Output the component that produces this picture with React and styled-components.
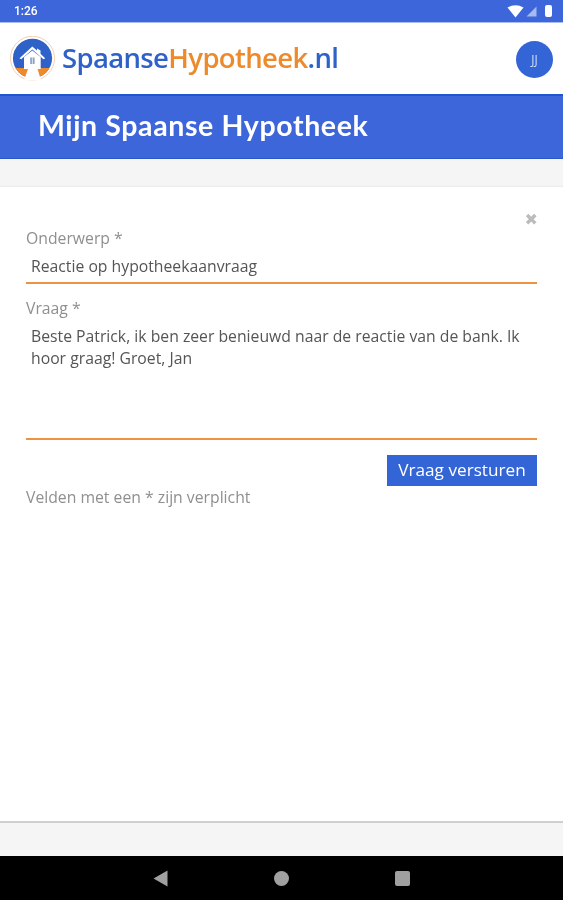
import React from 'react';
import styled, { createGlobalStyle } from 'styled-components';

const GlobalStyle = createGlobalStyle`
  html, body {
    margin: 0;
    padding: 0;
    background: #f5f5f5;
    font-family: "Open Sans", "Liberation Sans", sans-serif;
  }
  * { box-sizing: border-box; }
`;

const Logo = () => (
  <svg width="45" height="45" viewBox="0 0 45 45">
    <circle cx="22.5" cy="22.3" r="22" fill="#fff" stroke="#f5cfae" strokeWidth="1" />
    <clipPath id="logoClip">
      <circle cx="22.5" cy="22.3" r="19.6" />
    </clipPath>
    <g clipPath="url(#logoClip)">
      <rect x="0" y="0" width="45" height="45" fill="#2f62c9" />
      <rect x="0" y="32" width="45" height="13" fill="#ec8a2c" />
    </g>
    <path d="M18.3 32 L27.3 32 L31 44.5 L14 44.5 Z" fill="#fff" />
    <path d="M14 21 L22.3 14.5 L30.7 21 L30.7 33 L14 33 Z" fill="#fff" />
    <path d="M9.5 22.2 L22.3 10.5 L27 14.6 L27 12.6 L30.5 14.6 L30.5 17.8 L35.2 22.2 L33.5 23.2 L22.3 13.6 L11.2 23.2 Z" fill="#fff" />
    <rect x="20.2" y="21.5" width="4.4" height="6.5" fill="#8ca3c4" />
    <path d="M22.4 21.5 V28" stroke="#fff" strokeWidth="0.7" />
  </svg>
);

const App = () => {
  return (
    <Screen>
      <GlobalStyle />
      <StatusBar>
        <Clock>1:26</Clock>
        <StatusIcons>
          <svg width="17" height="13" viewBox="0 0 17 13">
            <path d="M0.5 2.5 Q8.5 -2 16.5 2.5 L8.5 12.5 Z" fill="#fff" />
          </svg>
          <svg width="11" height="11" viewBox="0 0 11 11">
            <path d="M10.5 0.5 V10.5 H0.5 Z" fill="#fff" opacity="0.55" />
          </svg>
          <Battery />
        </StatusIcons>
      </StatusBar>

      <Header>
        <Brand>
          <Logo />
          <BrandName>
            Spaanse<BrandAccent>Hypotheek</BrandAccent>.nl
          </BrandName>
        </Brand>
        <Avatar>JJ</Avatar>
      </Header>

      <TitleBar>
        <Title>Mijn Spaanse Hypotheek</Title>
      </TitleBar>

      <Main>
        <Card>
          <CloseRow>
            <CloseIcon>✖</CloseIcon>
          </CloseRow>
          <Label>Onderwerp *</Label>
          <Field>Reactie op hypotheekaanvraag</Field>
          <Label $gap>Vraag *</Label>
          <Field $area>Beste Patrick, ik ben zeer benieuwd naar de reactie van de bank. Ik hoor graag! Groet, Jan</Field>
          <Actions>
            <SendButton>Vraag versturen</SendButton>
          </Actions>
          <Note>Velden met een * zijn verplicht</Note>
        </Card>
      </Main>

      <NavBar>
        <svg width="15" height="17" viewBox="0 0 15 17">
          <path d="M14.5 0.5 V16.5 L0.5 8.5 Z" fill="#a0a0a0" />
        </svg>
        <HomeDot />
        <RecentSquare />
      </NavBar>
    </Screen>
  );
};

const Screen = styled.div`
  display: flex;
  flex-direction: column;
  width: 563px;
  height: 900px;
  overflow: hidden;
  filter: blur(0.45px);
`;

const StatusBar = styled.div`
  display: flex;
  align-items: center;
  justify-content: space-between;
  height: 23px;
  padding: 0 11px 0 14px;
  background: #3c66d9;
  border-bottom: 1px solid #a9bdf0;
`;

const Clock = styled.span`
  font-family: Roboto, "Liberation Sans", sans-serif;
  font-size: 12px;
  font-weight: 500;
  color: #fff;
`;

const StatusIcons = styled.div`
  display: flex;
  align-items: center;
  gap: 2px;
`;

const Battery = styled.div`
  width: 7px;
  height: 12px;
  margin-left: 6px;
  border-radius: 2px;
  background: #fff;
`;

const Header = styled.div`
  display: flex;
  align-items: center;
  justify-content: space-between;
  height: 71px;
  padding: 0 10px;
  background: #fff;
`;

const Brand = styled.div`
  display: flex;
  align-items: center;
  gap: 7px;
`;

const BrandName = styled.div`
  margin-top: -3px;
  font-family: "Open Sans", sans-serif;
  font-size: 27.5px;
  font-weight: 600;
  letter-spacing: -0.65px;
  color: #2f62c9;
`;

const BrandAccent = styled.span`
  color: #ec8a2c;
`;

const Avatar = styled.div`
  display: flex;
  align-items: center;
  justify-content: center;
  width: 37px;
  height: 37px;
  margin: 2px 0 0;
  border-radius: 50%;
  background: #3465d6;
  font-size: 12px;
  color: #d5def5;
`;

const TitleBar = styled.div`
  display: flex;
  align-items: center;
  height: 65px;
  padding: 0 38px 5px;
  background: #3c66d9;
  border-top: 2px solid #1f55d0;
  border-bottom: 1px solid #2a58c8;
`;

const Title = styled.h1`
  margin: 0;
  font-family: Lato, "Open Sans", sans-serif;
  font-size: 28.5px;
  font-weight: 700;
  letter-spacing: 0.62px;
  color: #fff;
`;

const Main = styled.main`
  flex: 1;
  display: flex;
  flex-direction: column;
  padding: 28px 0 33px;
  background: #f5f5f5;
`;

const Card = styled.section`
  flex: 1;
  padding: 22px 26px;
  background: #fff;
  border-bottom: 2px solid #cfcfcf;
  box-shadow: 0 -1px 1px #ececec;
`;

const CloseRow = styled.div`
  display: flex;
  justify-content: flex-end;
  height: 19px;
  margin-right: -1px;
`;

const CloseIcon = styled.span`
  font-family: "DejaVu Sans", sans-serif;
  font-size: 16px;
  line-height: 21px;
  color: #bcbcbc;
`;

const Label = styled.div`
  margin-top: ${p => (p.$gap ? '14px' : '0')};
  font-size: 15.75px;
  line-height: 20px;
  color: #8f8f8f;
`;

const Field = styled.div`
  height: ${p => (p.$area ? '122px' : '36px')};
  padding: 7px 5px 0;
  font-size: 15.75px;
  line-height: 22px;
  color: #555;
  border-bottom: 2px solid #ee9140;
`;

const Actions = styled.div`
  display: flex;
  justify-content: flex-end;
  margin-top: 15px;
`;

const SendButton = styled.button`
  width: 150px;
  height: 31px;
  padding: 0 0 2px;
  border: none;
  background: #3465d6;
  font-family: inherit;
  font-size: 17.2px;
  color: #fff;
`;

const Note = styled.div`
  margin-top: 1px;
  font-size: 15.75px;
  line-height: 20px;
  color: #8f8f8f;
`;

const NavBar = styled.nav`
  display: flex;
  align-items: center;
  justify-content: center;
  gap: 106px;
  height: 44px;
  background: #000;
`;

const HomeDot = styled.div`
  width: 15px;
  height: 15px;
  border-radius: 50%;
  background: #a0a0a0;
`;

const RecentSquare = styled.div`
  width: 15px;
  height: 15px;
  border-radius: 2px;
  background: #a0a0a0;
`;

export default App;
